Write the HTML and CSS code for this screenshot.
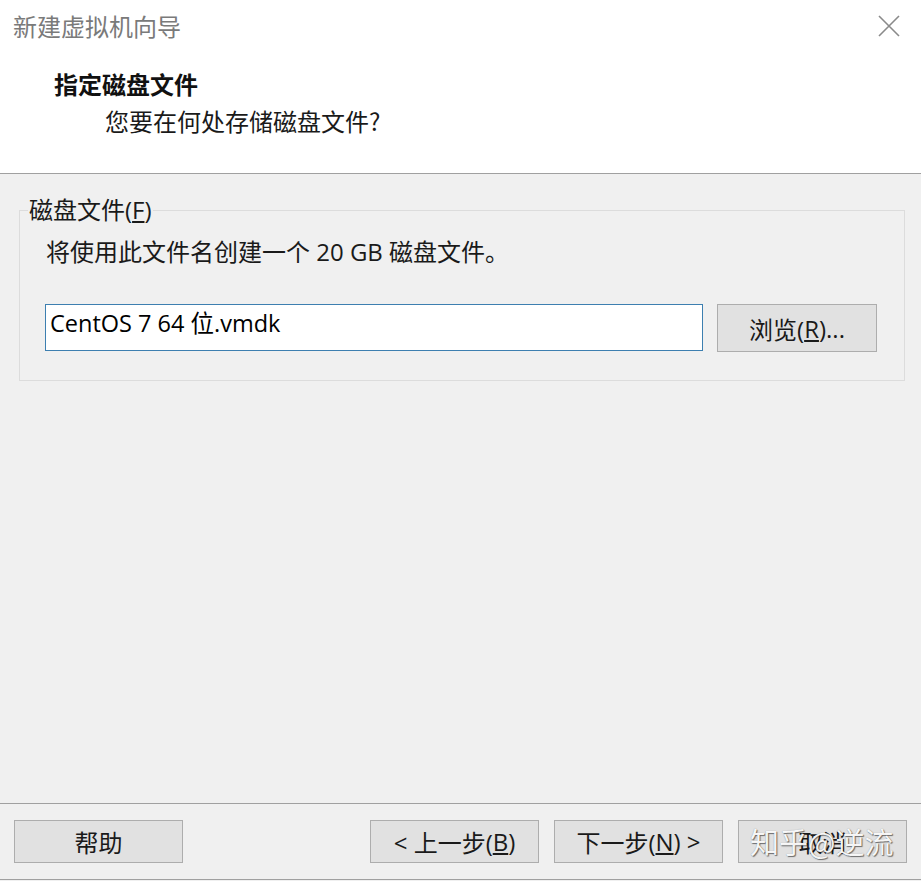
FILE: index.html
```html
<!DOCTYPE html>
<html>
<head>
<meta charset="utf-8">
<link rel="stylesheet" href="styles.css">
</head>
<body>
<div class="window">
  <div class="header">
    <div class="titlebar">
      <span class="title">新建虚拟机向导</span>
      <svg class="close" width="22" height="22" viewBox="0 0 22 22"><path d="M1 1 L21 21 M21 1 L1 21" stroke="#8a8a8a" stroke-width="1.6" fill="none"/></svg>
    </div>
    <div class="heading">指定磁盘文件</div>
    <div class="subheading">您要在何处存储磁盘文件?</div>
  </div>
  <div class="main">
    <fieldset class="group">
      <legend>磁盘文件(<u>F</u>)</legend>
      <div class="desc">将使用此文件名创建一个 20 GB 磁盘文件。</div>
      <div class="row">
        <div class="input">CentOS 7 64 位.vmdk</div>
        <div class="btn browse">浏览(<u>R</u>)...</div>
      </div>
    </fieldset>
  </div>
  <div class="footer">
    <div class="btn">帮助</div>
    <div class="spacer"></div>
    <div class="btn">&lt; 上一步(<u>B</u>)</div>
    <div class="btn">下一步(<u>N</u>) &gt;</div>
    <div class="btn cancel">取消<span class="watermark">知乎@逆流</span></div>
  </div>
</div>
</body>
</html>
```
FILE: styles.css
```css
html, body {
  margin: 0;
  padding: 0;
  background: #f0f0f0;
}
body {
  font-family: "Open Sans", "Noto Sans CJK SC", sans-serif;
  color: #1a1a1a;
}
.window {
  width: 921px;
  height: 881px;
  display: flex;
  flex-direction: column;
  overflow: hidden;
}
.header {
  height: 173px;
  background: #ffffff;
  border-bottom: 1px solid #a0a0a0;
  box-sizing: content-box;
}
.titlebar {
  display: flex;
  justify-content: space-between;
  align-items: center;
  height: 52px;
  padding: 0 21px 0 13px;
}
.title {
  font-family: "Noto Sans CJK SC", sans-serif;
  font-size: 24px;
  color: #7a7a7a;
  line-height: 30px;
  margin-top: -1px;
}
.close {
  margin-top: -1px;
}
.heading {
  font-family: "Noto Sans CJK SC", sans-serif;
  font-weight: bold;
  font-size: 24px;
  line-height: 30px;
  padding-left: 54px;
  margin-top: 17px;
  color: #111;
}
.subheading {
  font-family: "Noto Sans CJK SC", sans-serif;
  font-size: 24px;
  line-height: 30px;
  padding-left: 105px;
  margin-top: 7px;
  color: #1a1a1a;
}
.main {
  flex: 1;
  padding: 0 16px 0 19px;
}
.group {
  margin: 22px 0 0 0;
  padding: 12px 26px 28px 26px;
  border: 1px solid #dcdcdc;
  border-radius: 0;
  min-width: 0;
}
.group legend {
  font-family: "Open Sans", "Noto Sans CJK SC", sans-serif;
  font-size: 24px;
  line-height: 28px;
  padding: 0 1px;
  margin-left: -18px;
  color: #1a1a1a;
}
.desc {
  font-size: 24px;
  line-height: 32px;
  color: #1a1a1a;
}
.row {
  display: flex;
  gap: 14px;
  margin-top: 36px;
  margin-left: -1px;
}
.input {
  border: 1px solid #3d7fb0;
  background: #ffffff;
  font-size: 23.5px;
  line-height: 36px;
  padding-left: 4px;
  box-sizing: border-box;
  width: 658px;
  height: 47px;
  color: #000;
}
.btn {
  width: 169px;
  height: 43px;
  box-sizing: border-box;
  background: #e1e1e1;
  border: 1px solid #adadad;
  display: flex;
  align-items: center;
  justify-content: center;
  font-size: 24px;
  color: #1a1a1a;
  position: relative;
}
.browse {
  width: 160px;
  height: 48px;
}
.footer {
  border-top: 1px solid #a0a0a0;
  border-bottom: 1px solid #a0a0a0;
  display: flex;
  align-items: flex-start;
  gap: 15px;
  padding: 16px 14px 0 14px;
  margin-bottom: 1px;
  box-sizing: border-box;
  height: 77px;
}
.spacer {
  flex: 1;
}
.watermark {
  position: absolute;
  left: 11px;
  top: 1px;
  font-family: "Noto Sans CJK SC", sans-serif;
  font-size: 29px;
  line-height: 38px;
  color: rgba(255, 255, 255, 0.95);
  text-shadow: 1px 1px 1px rgba(0, 0, 0, 0.5), 0 0 1px rgba(0, 0, 0, 0.35);
  white-space: nowrap;
}
```
